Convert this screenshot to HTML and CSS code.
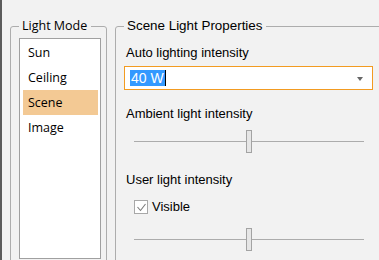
FILE: index.html
```html
<!DOCTYPE html>
<html lang="en">
<head>
<meta charset="UTF-8" />
<title>Light settings</title>
<link rel="stylesheet" href="styles.css">
</head>
<body>
<div class="window">

  <!-- Light Mode -->
  <fieldset class="group group-mode">
    <legend>Light Mode</legend>
    <ul class="listbox">
      <li>Sun</li>
      <li>Ceiling</li>
      <li class="selected">Scene</li>
      <li>Image</li>
    </ul>
  </fieldset>

  <!-- Scene Light Properties -->
  <fieldset class="group group-props">
    <legend>Scene Light Properties</legend>
    <div class="label label-first">Auto lighting intensity</div>
    <div class="combo">
      <span class="combo-value"><span class="sel">40 W</span><span class="caret"></span></span>
      <span class="combo-arrow"></span>
    </div>

    <div class="label label-ambient">Ambient light intensity</div>
    <div class="slider"><div class="thumb"></div></div>

    <div class="label label-user">User light intensity</div>
    <label class="check">
      <span class="box">
        <svg width="11" height="11" viewBox="0 0 11 11"><path d="M1.5 5 L4.5 8.5 L9.5 2" fill="none" stroke="#7a7a7a" stroke-width="1.1"/></svg>
      </span>
      Visible
    </label>
    <div class="slider slider-user"><div class="thumb"></div></div>
  </fieldset>

</div>
</body>
</html>
```

FILE: styles.css
```css
html, body {
  margin: 0;
  padding: 0;
  height: 100%;
  overflow: hidden;
  background-color: #f2f2f2;
  font-family: "Liberation Sans", Arial, sans-serif;
  color: #000;
}
.window {
  display: flex;
  height: 260px;
  box-sizing: border-box;
  border-left: 2px solid #5c5c5c;
  padding: 18px 0 0 8px;
  overflow: hidden;
}
.group {
  margin: 0;
  padding: 0 0 0 8px;
  border: 1px solid #adadad;
  border-radius: 3px;
  height: 280px;
  box-sizing: border-box;
  min-width: 0;
}
.group legend {
  padding: 0 4px 0 3px;
  font-size: 13.4px;
  line-height: 16px;
}
.group-mode {
  width: 97px;
  flex: none;
}
.group-mode legend {
  font-family: "Open Sans", "Noto Sans", sans-serif;
  font-size: 12.5px;
}
.group-props {
  width: 300px;
  flex: none;
  margin-left: 8px;
}
.listbox {
  list-style: none;
  margin: 4px 0 0 0;
  padding: 1px 2px 0 3px;
  width: 82px;
  height: 221px;
  box-sizing: border-box;
  background: #fff;
  border: 1px solid #a0a0a0;
  font-family: "Open Sans", "Noto Sans", sans-serif;
  font-size: 12.5px;
}
.listbox li {
  height: 25px;
  line-height: 25px;
  padding-left: 5px;
}
.listbox li.selected {
  background: #f3c994;
}
.label {
  font-size: 13px;
  line-height: 15px;
  margin-left: 2px;
}
.label-first {
  margin-top: 11px;
}
.label-ambient {
  margin-top: 16px;
}
.label-user {
  margin-top: 19px;
}
.combo {
  display: flex;
  align-items: center;
  justify-content: space-between;
  margin-top: 6px;
  width: 249px;
  height: 24px;
  box-sizing: border-box;
  border: 1px solid #f29b21;
  background: #fff;
  padding: 0 9px 0 5px;
  font-size: 14px;
}
.combo-value {
  display: flex;
  align-items: center;
}
.sel {
  background: #3399ff;
  color: #fff;
  line-height: 16px;
  padding: 0 1px 0 1px;
}
.caret {
  width: 1px;
  height: 16px;
  background: #000;
}
.combo-arrow {
  width: 0;
  height: 0;
  border-left: 3.5px solid transparent;
  border-right: 3.5px solid transparent;
  border-top: 4px solid #666;
  margin-top: 1px;
}
.slider {
  margin: 9px 0 0 10px;
  width: 230px;
  height: 23px;
  background: linear-gradient(#acacac, #acacac) 0 11px / 100% 1px no-repeat;
}
.slider-user {
  margin-top: 14px;
}
.thumb {
  margin-left: 112px;
  width: 6px;
  height: 23px;
  box-sizing: border-box;
  border: 1px solid #a3a3a3;
  background: #e6e6e6;
}
.check {
  display: flex;
  align-items: center;
  margin: 13px 0 0 10px;
  font-size: 13px;
  line-height: 14px;
}
.box {
  display: flex;
  align-items: center;
  justify-content: center;
  width: 14px;
  height: 14px;
  box-sizing: border-box;
  border: 1px solid #a8a8a8;
  background: #fff;
  margin-right: 4px;
}
.box svg {
  display: block;
}
```
